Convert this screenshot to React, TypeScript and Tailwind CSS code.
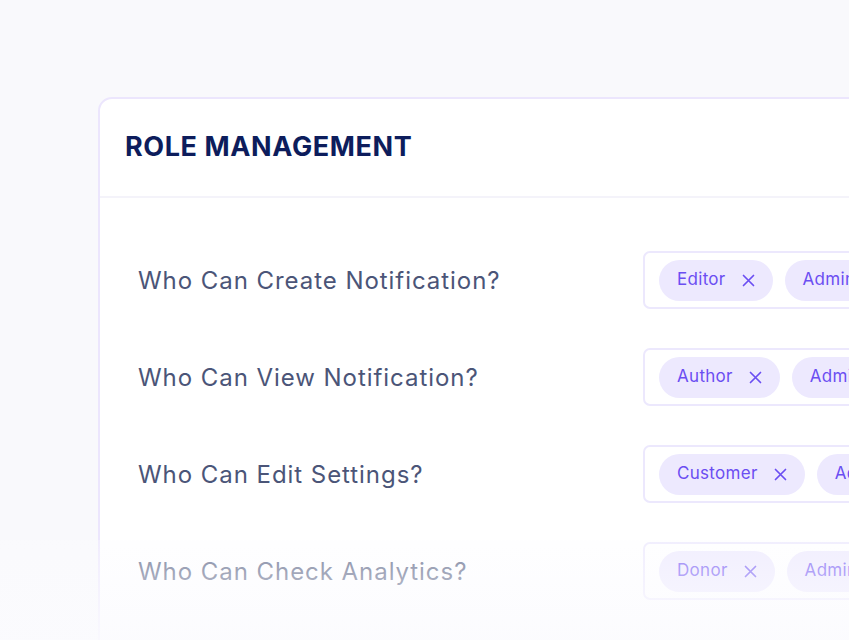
import React from 'react';

const rows = [
  { label: 'Who Can Create Notification?', roles: ['Editor', 'Admin'] },
  { label: 'Who Can View Notification?', roles: ['Author', 'Admin'] },
  { label: 'Who Can Edit Settings?', roles: ['Customer', 'Admin'] },
  { label: 'Who Can Check Analytics?', roles: ['Donor', 'Admin'] },
];

function XIcon() {
  return (
    <svg width="13" height="13" viewBox="0 0 13 13" fill="none" className="shrink-0">
      <path d="M1.5 1.5L11.5 11.5M11.5 1.5L1.5 11.5" stroke="currentColor" strokeWidth="1.7" strokeLinecap="round" />
    </svg>
  );
}

export default function App() {
  return (
    <div className="relative h-[640px] w-[849px] overflow-hidden bg-[#f9f9fc] font-['Inter',sans-serif]">
      <div className="ml-[98px] mt-[97px] w-[820px] rounded-[14px] border-2 border-[#ece6fd] bg-white">
        {/* header */}
        <div className="flex h-[99px] items-center border-b-2 border-[#f4f3fa] pl-[25px]">
          <h1 className="text-[27px] font-bold tracking-[0.6px] text-[#0d1d5c]">ROLE MANAGEMENT</h1>
        </div>

        {/* rows */}
        <div className="flex flex-col gap-[39px] pl-[38px] pt-[53px] pb-[60px]">
          {rows.map((row) => (
            <div key={row.label} className="flex h-[58px] items-center">
              <div className="w-[505px] shrink-0 pt-[2px] text-[24px] tracking-[0.95px] text-[#4b5578]">{row.label}</div>
              <div className="flex h-[58px] min-w-0 flex-1 items-center gap-3 overflow-hidden rounded-[7px] border-2 border-[#ece8fd] pl-[14px]">
                {row.roles.map((r) => (
                  <span
                    key={r}
                    className="flex h-[41px] shrink-0 items-center gap-4 rounded-full bg-[#ede9fe] pl-[18px] pr-[18px] text-[17px] tracking-[0.3px] text-[#6b4ef2]"
                  >
                    {r}
                    <XIcon />
                  </span>
                ))}
              </div>
            </div>
          ))}
        </div>
      </div>

      {/* bottom fade */}
      <div className="pointer-events-none absolute inset-x-0 bottom-0 h-[100px] bg-gradient-to-b from-[#fcfcff]/30 to-[#fbfbfe]/88" />
    </div>
  );
}
